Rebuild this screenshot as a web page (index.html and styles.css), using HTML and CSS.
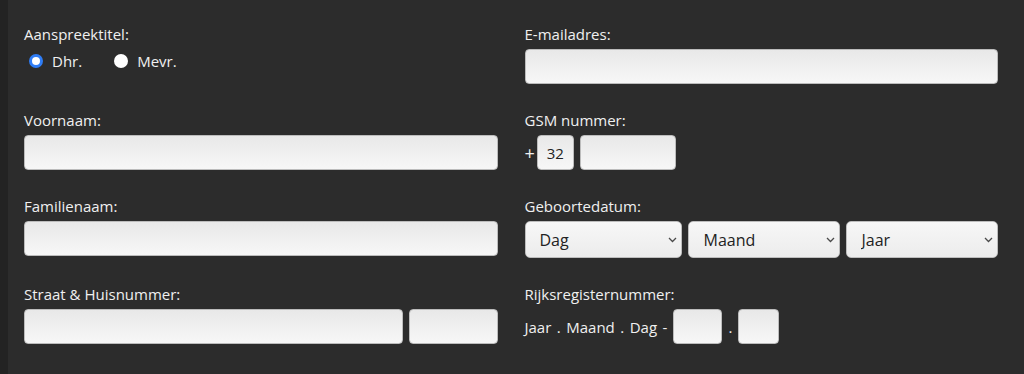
FILE: index.html
```html
<!DOCTYPE html>
<html lang="nl">
<head>
    <meta charset="UTF-8">
    <meta name="viewport" content="width=device-width, initial-scale=1.0">
    <title>Gegevens</title>
    <link rel="stylesheet" href="styles.css">
</head>
<body>

<div class="page">
    <div class="edge"></div>

    <form class="form">
        <div class="field">
            <label class="label">Aanspreektitel:</label>
            <div class="radios">
                <label class="radio"><input type="radio" name="titel" checked> Dhr.</label>
                <label class="radio"><input type="radio" name="titel"> Mevr.</label>
            </div>
        </div>

        <div class="field">
            <label class="label" for="email">E-mailadres:</label>
            <input class="text" type="text" id="email">
        </div>

        <div class="field">
            <label class="label" for="voornaam">Voornaam:</label>
            <input class="text" type="text" id="voornaam">
        </div>

        <div class="field">
            <label class="label" for="gsm">GSM nummer:</label>
            <div class="phone">
                <span class="plus">+</span>
                <input class="text prefix" type="text" value="32">
                <input class="text gsm" type="text" id="gsm">
            </div>
        </div>

        <div class="field">
            <label class="label" for="familienaam">Familienaam:</label>
            <input class="text" type="text" id="familienaam">
        </div>

        <div class="field">
            <label class="label">Geboortedatum:</label>
            <div class="birth">
                <div class="select">
                    <select><option>Dag</option></select>
                    <svg class="chev" width="9" height="6" viewBox="0 0 9 6"><polyline points="1,1 4.5,4.5 8,1" fill="none" stroke="#4a4a4a" stroke-width="1.3"/></svg>
                </div>
                <div class="select">
                    <select><option>Maand</option></select>
                    <svg class="chev" width="9" height="6" viewBox="0 0 9 6"><polyline points="1,1 4.5,4.5 8,1" fill="none" stroke="#4a4a4a" stroke-width="1.3"/></svg>
                </div>
                <div class="select">
                    <select><option>Jaar</option></select>
                    <svg class="chev" width="9" height="6" viewBox="0 0 9 6"><polyline points="1,1 4.5,4.5 8,1" fill="none" stroke="#4a4a4a" stroke-width="1.3"/></svg>
                </div>
            </div>
        </div>

        <div class="field">
            <label class="label" for="straat">Straat &amp; Huisnummer:</label>
            <div class="street">
                <input class="text" type="text" id="straat">
                <input class="text housenr" type="text">
            </div>
        </div>

        <div class="field">
            <label class="label">Rijksregisternummer:</label>
            <div class="rrn">
                <span class="rrn-hint">Jaar . Maand . Dag -</span>
                <input class="text rrn-a" type="text">
                <span>.</span>
                <input class="text rrn-b" type="text">
            </div>
        </div>

        <div class="field">
            <label class="label" for="postcode">Postcode &amp; Gemeente:</label>
            <input class="text" type="text" id="postcode">
        </div>
    </form>
</div>

</body>
</html>
```

FILE: styles.css
```css
html, body {
    margin: 0;
    height: 100%;
}
body {
    background-color: #2c2c2c;
    color: #f0f0f0;
    font-family: "Open Sans", Arial, sans-serif;
    font-size: 15px;
    overflow: hidden;
}
.page {
    display: flex;
    min-height: 100%;
}
.edge {
    width: 8px;
    flex: none;
    background-color: #232323;
}
.form {
    flex: 1;
    display: grid;
    grid-template-columns: 1fr 1fr;
    column-gap: 27px;
    row-gap: 26px;
    align-content: start;
    padding: 24px 26px 0 16px;
}
.label {
    display: block;
    line-height: 20px;
    margin-bottom: 5px;
}
.radios {
    display: flex;
    gap: 32px;
    margin-top: 7px;
    padding-left: 5px;
    line-height: 20px;
}
.radio {
    display: flex;
    align-items: center;
    gap: 9px;
}
.radio input {
    appearance: none;
    width: 14px;
    height: 14px;
    margin: 0;
    border-radius: 50%;
    background-color: #fff;
    box-sizing: border-box;
}
.radio input:checked {
    border: 3.5px solid #2f7df6;
}
.text {
    display: block;
    width: 100%;
    height: 35px;
    box-sizing: border-box;
    margin: 0;
    padding: 0 10px;
    border: 1px solid #bcbcbc;
    border-radius: 4px;
    background: linear-gradient(#e8e8e8, #f7f7f7);
    font-family: inherit;
    font-size: 15px;
    color: #222;
}
.phone {
    display: flex;
    align-items: center;
    gap: 2px;
}
.plus {
    font-size: 18px;
    line-height: 20px;
}
.prefix {
    width: 37px;
    padding: 0;
    text-align: center;
}
.gsm {
    width: 96px;
    margin-left: 4px;
}
.birth {
    display: grid;
    grid-template-columns: 158fr 152fr 152fr;
    gap: 6.5px;
}
.select {
    position: relative;
}
.select select {
    appearance: none;
    display: block;
    width: 100%;
    height: 37px;
    margin: 0;
    padding: 0 22px 0 14px;
    border: 1px solid #bdbdbd;
    border-radius: 5px;
    background: linear-gradient(#f7f7f7, #ececec);
    font-family: inherit;
    font-size: 16px;
    color: #222;
}
.chev {
    position: absolute;
    right: 5px;
    top: 16px;
}
.street {
    display: flex;
    gap: 6px;
}
.housenr {
    width: 89px;
    flex: none;
}
.rrn {
    display: flex;
    align-items: center;
    gap: 6px;
    line-height: 20px;
}
.rrn-hint {
    word-spacing: 1.6px;
}
.rrn-a {
    width: 49px;
}
.rrn-b {
    width: 41px;
}
```
